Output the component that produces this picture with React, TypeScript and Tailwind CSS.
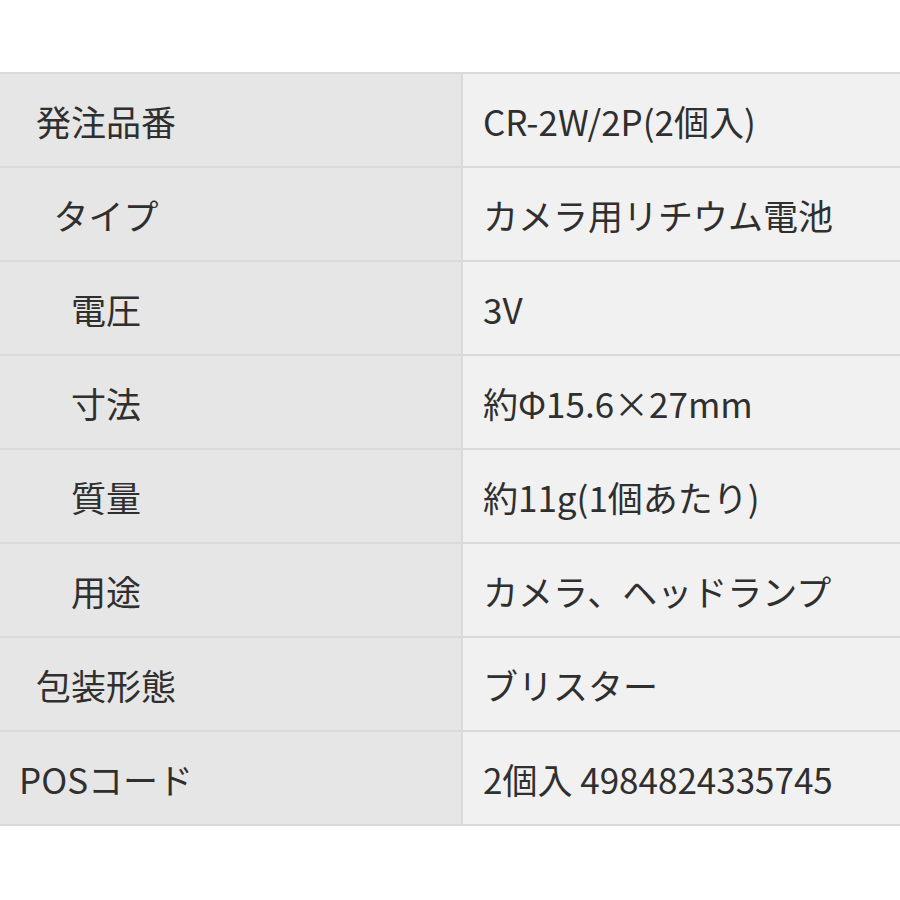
const rows: [string, string][] = [
  ["発注品番", "CR-2W/2P(2個入)"],
  ["タイプ", "カメラ用リチウム電池"],
  ["電圧", "3V"],
  ["寸法", "約Φ15.6×27mm"],
  ["質量", "約11g(1個あたり)"],
  ["用途", "カメラ、ヘッドランプ"],
  ["包装形態", "ブリスター"],
  ["POSコード", "2個入 4984824335745"],
];

export default function App() {
  return (
    <div
      className="min-h-[900px] w-[900px] overflow-hidden bg-white pt-[72px] text-[#2f2f2f]"
      style={{ fontFamily: '"Noto Sans CJK JP", "Noto Sans", sans-serif' }}
    >
      <div className="w-[900px] border-t-2 border-[#dadada]">
        {rows.map(([label, value]) => (
          <div key={label} className="flex h-[94px] border-b-2 border-[#dadada]">
            <div className="flex w-[463px] shrink-0 items-center border-r-2 border-[#dadada] bg-[#e6e6e6]">
              <div className="w-[212px] text-center text-[35px] leading-none">{label}</div>
            </div>
            <div className="flex flex-1 items-center bg-[#f1f1f1] pl-[20px] text-[35px] leading-none">
              {value}
            </div>
          </div>
        ))}
      </div>
    </div>
  );
}
